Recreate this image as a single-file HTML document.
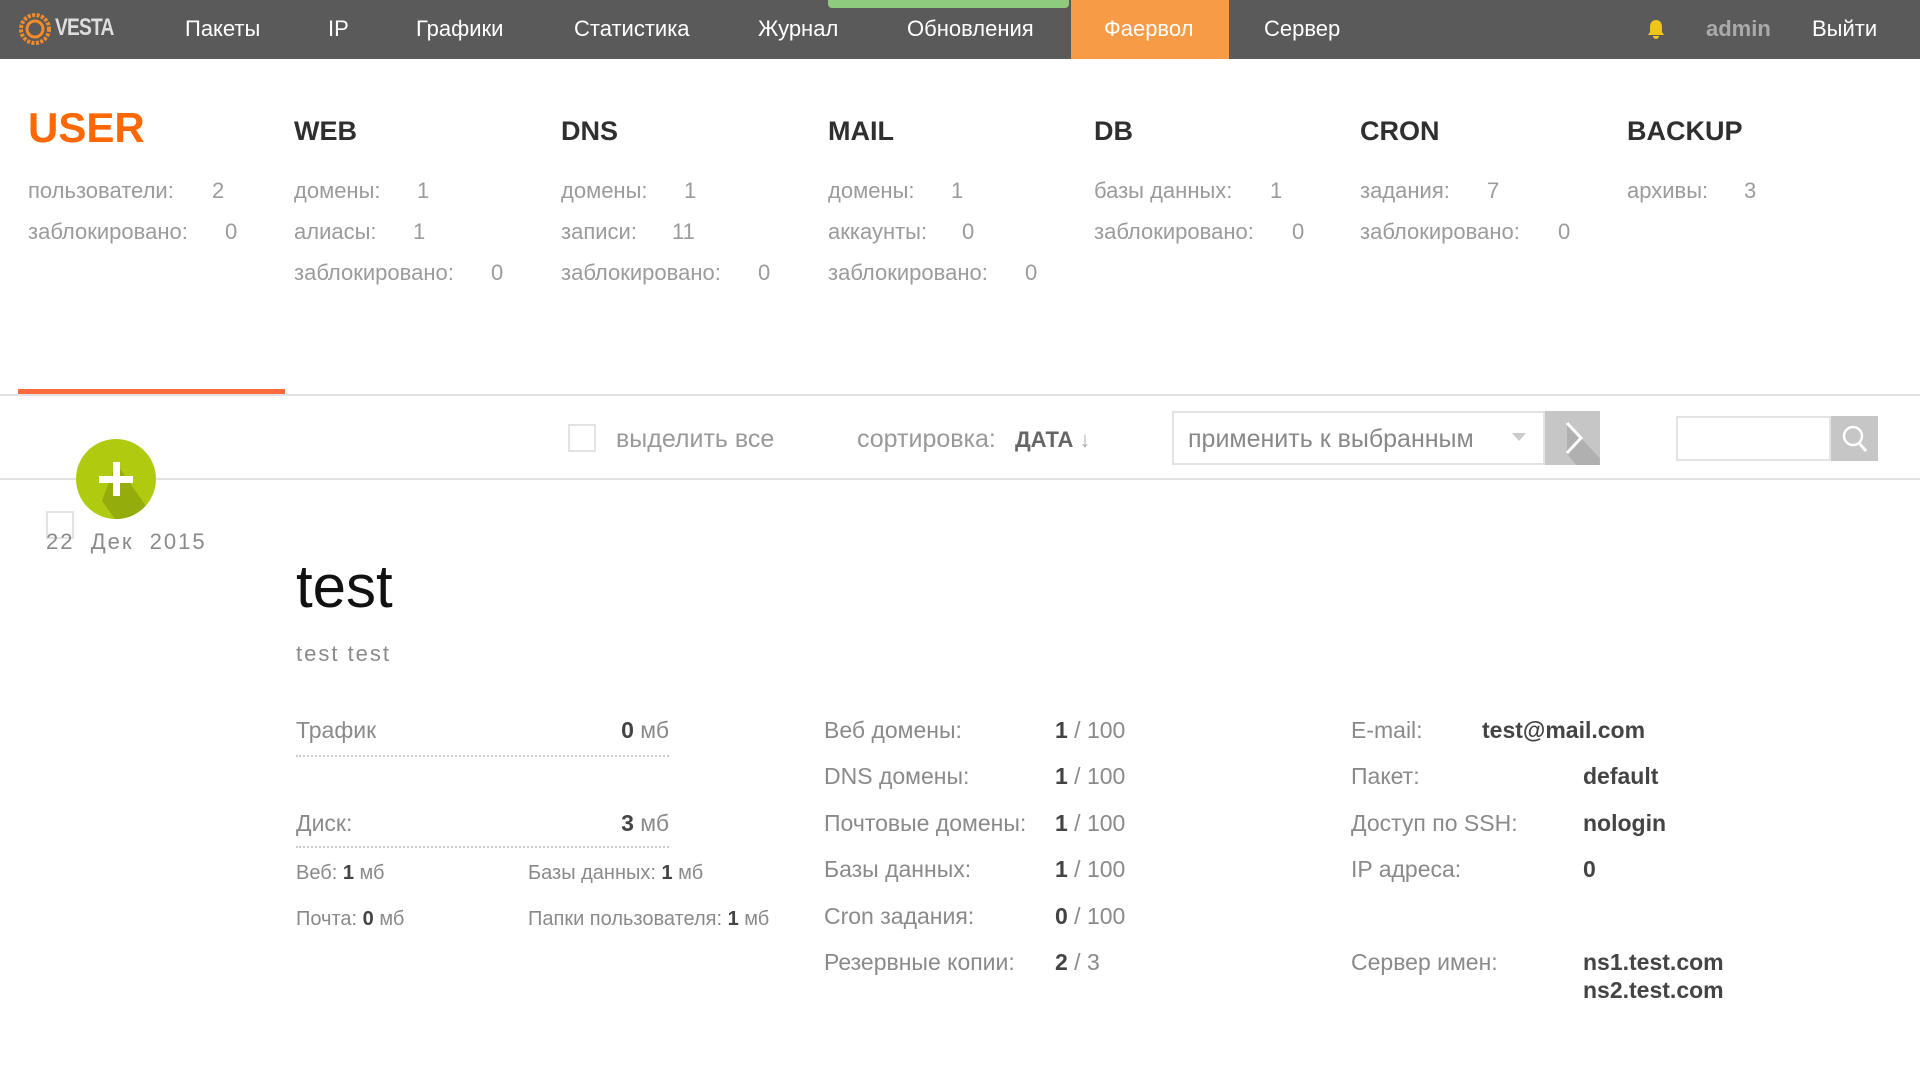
<!DOCTYPE html>
<html><head><meta charset="utf-8"><style>
*{margin:0;padding:0;box-sizing:border-box}
body{width:1920px;height:1079px;background:#fff;font-family:"Liberation Sans",sans-serif;position:relative;overflow:hidden;color:#999}
.a{position:absolute;white-space:nowrap}
.nav{position:absolute;left:0;top:0;width:1920px;height:59px;background:#5a5a5a}
.nav .a{color:#fff;font-size:22px;top:16px}
.h{font-size:27px;font-weight:bold;color:#2f2f2f;top:116px}
.s{font-size:22px;color:#9b9b9b}
.d{font-size:23px;color:#8a8a8a}
.d b{color:#444}
.sm{font-size:20px;color:#8a8a8a}
.sm b{color:#444}
.v{font-size:23px;color:#444;font-weight:bold}
</style></head><body>
<div class="nav">
 <svg class="a" style="left:18px;top:12px" width="34" height="34" viewBox="0 0 34 34"><circle cx="17" cy="17" r="14" fill="none" stroke="#f58a2a" stroke-width="4" stroke-dasharray="3 1.5"/><circle cx="17" cy="17" r="8" fill="none" stroke="#f58a2a" stroke-width="3"/></svg>
 <div class="a" style="left:55px;top:14px;font-size:24px;font-weight:bold;letter-spacing:-1px;color:#ddd;transform:scaleX(.8);transform-origin:left">VESTA</div>
 <div class="a" style="left:185px">Пакеты</div>
 <div class="a" style="left:328px">IP</div>
 <div class="a" style="left:416px">Графики</div>
 <div class="a" style="left:574px">Статистика</div>
 <div class="a" style="left:758px">Журнал</div>
 <div class="a" style="left:828px;top:0;width:241px;height:8px;background:#8fcb7e;border-radius:0 0 4px 4px"></div>
 <div class="a" style="left:907px">Обновления</div>
 <div class="a" style="left:1071px;top:0;width:158px;height:59px;background:#f79b46"></div>
 <div class="a" style="left:1104px">Фаервол</div>
 <div class="a" style="left:1264px">Сервер</div>
 <svg class="a" style="left:1646px;top:18px" width="20" height="22" viewBox="0 0 20 22"><path d="M10 2c-4 0-6 3-6 7v5l-2 3h16l-2-3V9c0-4-2-7-6-7zM7 18a3 3 0 0 0 6 0z" fill="#f0c419"/></svg>
 <div class="a" style="left:1706px;color:#aaa;font-weight:bold">admin</div>
 <div class="a" style="left:1812px">Выйти</div>
</div>

<div class="a" style="left:28px;top:104px;font-size:42px;font-weight:bold;color:#ff6701">USER</div>
<div class="a h" style="left:294px">WEB</div>
<div class="a h" style="left:561px">DNS</div>
<div class="a h" style="left:828px">MAIL</div>
<div class="a h" style="left:1094px">DB</div>
<div class="a h" style="left:1360px">CRON</div>
<div class="a h" style="left:1627px">BACKUP</div>

<div class="a s" style="left:28px;top:178px">пользователи:</div><div class="a s" style="left:212px;top:178px">2</div>
<div class="a s" style="left:28px;top:219px">заблокировано:</div><div class="a s" style="left:225px;top:219px">0</div>

<div class="a s" style="left:294px;top:178px">домены:</div><div class="a s" style="left:417px;top:178px">1</div>
<div class="a s" style="left:294px;top:219px">алиасы:</div><div class="a s" style="left:413px;top:219px">1</div>
<div class="a s" style="left:294px;top:260px">заблокировано:</div><div class="a s" style="left:491px;top:260px">0</div>

<div class="a s" style="left:561px;top:178px">домены:</div><div class="a s" style="left:684px;top:178px">1</div>
<div class="a s" style="left:561px;top:219px">записи:</div><div class="a s" style="left:672px;top:219px">11</div>
<div class="a s" style="left:561px;top:260px">заблокировано:</div><div class="a s" style="left:758px;top:260px">0</div>

<div class="a s" style="left:828px;top:178px">домены:</div><div class="a s" style="left:951px;top:178px">1</div>
<div class="a s" style="left:828px;top:219px">аккаунты:</div><div class="a s" style="left:962px;top:219px">0</div>
<div class="a s" style="left:828px;top:260px">заблокировано:</div><div class="a s" style="left:1025px;top:260px">0</div>

<div class="a s" style="left:1094px;top:178px">базы данных:</div><div class="a s" style="left:1270px;top:178px">1</div>
<div class="a s" style="left:1094px;top:219px">заблокировано:</div><div class="a s" style="left:1292px;top:219px">0</div>

<div class="a s" style="left:1360px;top:178px">задания:</div><div class="a s" style="left:1487px;top:178px">7</div>
<div class="a s" style="left:1360px;top:219px">заблокировано:</div><div class="a s" style="left:1558px;top:219px">0</div>

<div class="a s" style="left:1627px;top:178px">архивы:</div><div class="a s" style="left:1744px;top:178px">3</div>

<div class="a" style="left:18px;top:389px;width:267px;height:5px;background:#ff6a3d"></div>
<div class="a" style="left:0;top:394px;width:1920px;height:2px;background:#e2e2e2"></div>
<div class="a" style="left:0;top:478px;width:1920px;height:2px;background:#e2e2e2"></div>

<div class="a" style="left:568px;top:424px;width:28px;height:28px;border:2px solid #e3e3e3"></div>
<div class="a" style="left:616px;top:425px;font-size:25px;color:#999">выделить все</div>
<div class="a" style="left:857px;top:425px;font-size:25px;color:#999">сортировка:</div>
<div class="a" style="left:1015px;top:427px;font-size:22px;font-weight:bold;color:#666">ДАТА <span style="font-weight:normal;color:#aaa">↓</span></div>

<div class="a" style="left:1172px;top:411px;width:373px;height:54px;border:2px solid #e3e3e3;background:#fff"></div>
<div class="a" style="left:1188px;top:425px;font-size:25px;color:#888">применить к выбранным</div>
<div class="a" style="left:1512px;top:433px;width:0;height:0;border-left:7px solid transparent;border-right:7px solid transparent;border-top:8px solid #ccc"></div>
<div class="a" style="left:1545px;top:411px;width:55px;height:54px;background:#c6c6c6;overflow:hidden">
 <svg width="55" height="54"><path d="M22 10l14 17l28 30l-30 0l-12 -14z" fill="#b0b0b0"/><path d="M22 12l14 15l-14 15" stroke="#fff" stroke-width="3" fill="none"/></svg>
</div>
<div class="a" style="left:1676px;top:416px;width:155px;height:45px;border:2px solid #e3e3e3"></div>
<div class="a" style="left:1831px;top:416px;width:47px;height:45px;background:#c6c6c6">
 <svg width="47" height="45"><circle cx="22" cy="20" r="9" stroke="#fff" stroke-width="2.5" fill="none"/><path d="M28 27l7 8" stroke="#fff" stroke-width="3"/></svg>
</div>

<div class="a" style="left:76px;top:439px;width:80px;height:80px;border-radius:50%;background:#b0cb0f;overflow:hidden">
 <svg width="80" height="80"><path d="M40 24l46 66l-40 0l-20 -28z" fill="#94ad0c"/><rect x="37" y="23" width="7" height="34" fill="#fff"/><rect x="23" y="37" width="34" height="7" fill="#fff"/></svg>
</div>
<div class="a" style="left:46px;top:511px;width:28px;height:28px;border:2px solid #e3e3e3"></div>
<div class="a" style="left:46px;top:529px;font-size:22px;color:#8a8a8a;letter-spacing:2px">22&nbsp; Дек&nbsp; 2015</div>

<div class="a" style="left:296px;top:552px;font-size:60px;color:#111">test</div>
<div class="a" style="left:296px;top:641px;font-size:22px;color:#8a8a8a;letter-spacing:2px">test test</div>

<div class="a d" style="left:296px;top:717px">Трафик</div>
<div class="a d" style="left:590px;top:717px;width:79px;text-align:right"><b>0</b> мб</div>
<div class="a" style="left:296px;top:755px;width:373px;border-top:2px dotted #ccc"></div>
<div class="a d" style="left:296px;top:810px">Диск:</div>
<div class="a d" style="left:590px;top:810px;width:79px;text-align:right"><b>3</b> мб</div>
<div class="a" style="left:296px;top:846px;width:373px;border-top:2px dotted #ccc"></div>
<div class="a sm" style="left:296px;top:862px">Веб: <b>1</b> мб</div>
<div class="a sm" style="left:528px;top:862px">Базы данных: <b>1</b> мб</div>
<div class="a sm" style="left:296px;top:908px">Почта: <b>0</b> мб</div>
<div class="a sm" style="left:528px;top:908px">Папки пользователя: <b>1</b> мб</div>

<div class="a d" style="left:824px;top:717px">Веб домены:</div><div class="a d" style="left:1055px;top:717px"><b>1</b> / 100</div>
<div class="a d" style="left:824px;top:763px">DNS домены:</div><div class="a d" style="left:1055px;top:763px"><b>1</b> / 100</div>
<div class="a d" style="left:824px;top:810px">Почтовые домены:</div><div class="a d" style="left:1055px;top:810px"><b>1</b> / 100</div>
<div class="a d" style="left:824px;top:856px">Базы данных:</div><div class="a d" style="left:1055px;top:856px"><b>1</b> / 100</div>
<div class="a d" style="left:824px;top:903px">Cron задания:</div><div class="a d" style="left:1055px;top:903px"><b>0</b> / 100</div>
<div class="a d" style="left:824px;top:949px">Резервные копии:</div><div class="a d" style="left:1055px;top:949px"><b>2</b> / 3</div>

<div class="a d" style="left:1351px;top:717px">E-mail:</div><div class="a v" style="left:1482px;top:717px">test@mail.com</div>
<div class="a d" style="left:1351px;top:763px">Пакет:</div><div class="a v" style="left:1583px;top:763px">default</div>
<div class="a d" style="left:1351px;top:810px">Доступ по SSH:</div><div class="a v" style="left:1583px;top:810px">nologin</div>
<div class="a d" style="left:1351px;top:856px">IP адреса:</div><div class="a v" style="left:1583px;top:856px">0</div>
<div class="a d" style="left:1351px;top:949px">Сервер имен:</div><div class="a v" style="left:1583px;top:949px">ns1.test.com</div>
<div class="a v" style="left:1583px;top:977px">ns2.test.com</div>
</body></html>
